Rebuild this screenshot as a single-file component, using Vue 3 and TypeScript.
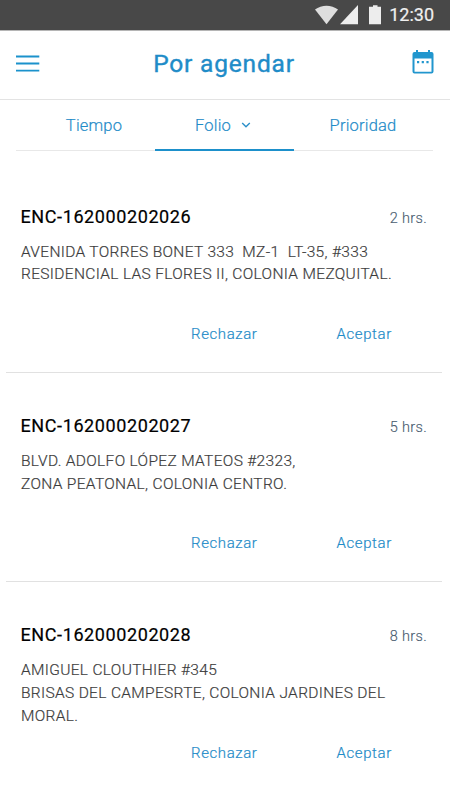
<script setup lang="ts">
interface Order {
  id: string
  wait: string
  lines: string[]
}

const orders: Order[] = [
  {
    id: 'ENC-162000202026',
    wait: '2 hrs.',
    lines: ['AVENIDA TORRES BONET 333  MZ-1  LT-35, #333', 'RESIDENCIAL LAS FLORES II, COLONIA MEZQUITAL.'],
  },
  {
    id: 'ENC-162000202027',
    wait: '5 hrs.',
    lines: ['BLVD. ADOLFO LÓPEZ MATEOS #2323,', 'ZONA PEATONAL, COLONIA CENTRO.'],
  },
  {
    id: 'ENC-162000202028',
    wait: '8 hrs.',
    lines: ['AMIGUEL CLOUTHIER #345', 'BRISAS DEL CAMPESRTE, COLONIA JARDINES DEL', 'MORAL.'],
  },
]
</script>

<template>
  <div class="screen">
    <div class="status">
      <svg class="status-icons" width="70" height="24" viewBox="0 0 70 24">
        <path d="M0 4.600C6.500-.6 16.500-.6 23 4.600L11.500 19.300Z" fill="#dedede" />
        <path d="M43 0V19.300H25Z" fill="#ededed" />
        <path d="M58 .3h4.500v1.400h3.500v17.600H54V1.700h4Z" fill="#ededed" />
      </svg>
      <span class="clock">12:30</span>
    </div>

    <header class="bar">
      <button class="icon-btn" aria-label="Menú">
        <svg width="24" height="18" viewBox="0 0 24 18">
          <path d="M0 1.500H23.300M0 8.500H23.300M0 15.700H23.300" stroke="#1b92cc" stroke-width="1.800" />
        </svg>
      </button>
      <h1 class="title">Por agendar</h1>
      <button class="icon-btn calendar" aria-label="Calendario">
        <svg width="22" height="24" viewBox="0 0 22 24">
          <path
            fill="#2196ce"
            fill-rule="evenodd"
            d="M4 0h2v2h10V0h2v2h1.500A2 2 0 0 1 21.500 4v17.500a2 2 0 0 1-2 2h-17a2 2 0 0 1-2-2V4a2 2 0 0 1 2-2H4ZM2.500 8.500v13.200h17v-13.200Z"
          />
          <path fill="#2196ce" d="M5 11h2.200v2.200H5ZM9.700 11h2.200v2.200H9.700ZM14.400 11h2.200v2.200h-2.200Z" />
        </svg>
      </button>
    </header>

    <nav class="tabs">
      <button class="tab tiempo">Tiempo</button>
      <button class="tab active">
        Folio
        <svg class="chevron" width="10" height="6" viewBox="0 0 10 6">
          <path d="M1.200 1L5 4.700L8.800 1" fill="none" stroke="#2b8fc9" stroke-width="1.400" />
        </svg>
      </button>
      <button class="tab prioridad">Prioridad</button>
    </nav>

    <main class="list">
      <article v-for="order in orders" :key="order.id" class="card">
        <div class="head">
          <h2 class="folio">{{ order.id }}</h2>
          <span class="wait">{{ order.wait }}</span>
        </div>
        <div class="address">
          <div v-for="line in order.lines" :key="line">{{ line }}</div>
        </div>
        <div class="actions">
          <button class="action">Rechazar</button>
          <button class="action">Aceptar</button>
        </div>
      </article>
    </main>
  </div>
</template>

<style>
body {
  margin: 0;
  background: #fff;
}
</style>

<style scoped>
.screen {
  width: 450px;
  height: 800px;
  overflow: hidden;
  background: #fff;
  font-family: Roboto, sans-serif;
  color: #1f8cc8;
}
button {
  padding: 0;
  border: 0;
  background: none;
  font: inherit;
  color: inherit;
}
.status {
  box-sizing: border-box;
  height: 30px;
  padding: 5px 16px 0 0;
  display: flex;
  justify-content: flex-end;
  background: #484848;
}
.status-icons {
  margin-right: 4px;
}
.clock {
  font-size: 18px;
  line-height: 20px;
  color: #f0f0f0;
  -webkit-text-stroke: 0.200px #f0f0f0;
}
.bar {
  box-sizing: border-box;
  height: 70px;
  padding: 0 16px 3px;
  display: flex;
  align-items: center;
  justify-content: space-between;
  border-top: 1px solid #b5b5b5;
  border-bottom: 1px solid #e3e3e3;
}
.icon-btn {
  display: flex;
}
.calendar {
  padding-bottom: 3px;
}
.title {
  margin: 0 4px 0 0;
  font-size: 24.500px;
  font-weight: 400;
  letter-spacing: 0.800px;
  line-height: 30px;
  -webkit-text-stroke: 0.400px #1f8cc8;
}
.tabs {
  height: 50.500px;
  margin: 0 17px 0 16px;
  display: grid;
  grid-template-columns: 139px 139px 139px;
  box-shadow: inset 0 -1px #e8e8e8;
}
.tab {
  display: flex;
  align-items: center;
  justify-content: center;
  padding-top: 2px;
  font-size: 16.500px;
  font-weight: 300;
  letter-spacing: 0.200px;
  border-bottom: 2px solid transparent;
  -webkit-text-stroke: 0.200px #1f8cc8;
}
.tiempo {
  padding-left: 17px;
}
.active {
  padding-right: 3px;
  border-bottom-color: #1d90cb;
}
.prioridad {
  padding-right: 1px;
}
.chevron {
  margin-left: 10px;
}
.list {
  padding: 13px 8px 0 6px;
}
.card {
  box-sizing: border-box;
  height: 209.300px;
  padding: 41px 15px 0 15px;
  display: flex;
  flex-direction: column;
  border-bottom: 1px solid #e1e1e1;
}
.card:last-child {
  border-bottom: 0;
}
.head {
  display: flex;
  justify-content: space-between;
  align-items: center;
}
.folio {
  margin: 0 0 0 -0.500px;
  font-size: 18px;
  font-weight: 400;
  letter-spacing: 0.600px;
  line-height: 24px;
  color: #000;
  -webkit-text-stroke: 0.200px #000;
}
.wait {
  padding-top: 3px;
  font-size: 14.500px;
  font-weight: 300;
  letter-spacing: 0.350px;
  color: #4a5d70;
  -webkit-text-stroke: 0.150px #4a5d70;
}
.address {
  height: 68px;
  margin-top: 12px;
  font-size: 15.500px;
  font-weight: 300;
  letter-spacing: 0.330px;
  line-height: 22.700px;
  color: #3c3c3c;
  white-space: pre;
  -webkit-text-stroke: 0.200px #3c3c3c;
}
.actions {
  margin-top: 15.500px;
  padding-left: 170px;
  display: flex;
  gap: 79px;
  font-size: 15px;
  font-weight: 300;
  line-height: 20px;
}
.action {
  letter-spacing: 0.600px;
  -webkit-text-stroke: 0.200px #1f8cc8;
}
</style>
